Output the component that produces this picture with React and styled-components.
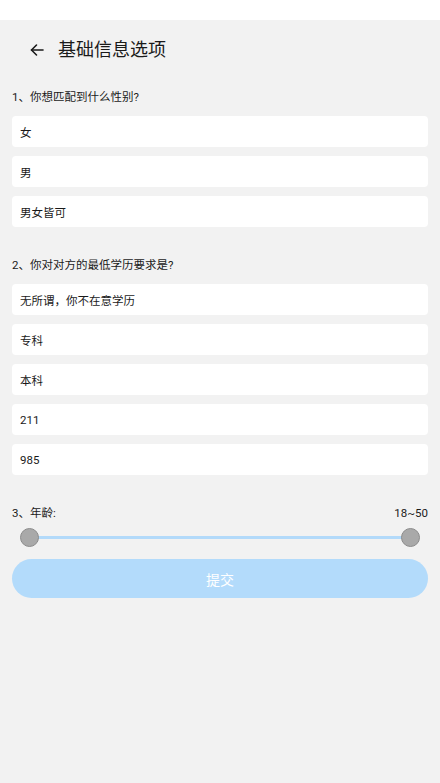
import React from "react";
import styled, { createGlobalStyle } from "styled-components";

const Global = createGlobalStyle`
  html, body { margin: 0; padding: 0; background: #f2f2f2; }
  body { font-family: Roboto, "Noto Sans CJK SC", sans-serif; color: #1a1a1a; }
  * { box-sizing: border-box; }
`;

const Page = styled.div`
  min-height: 783px;
  background: #f2f2f2;
  display: flex;
  flex-direction: column;
`;

const StatusBar = styled.div`
  height: 20px;
  background: #ffffff;
`;

const Header = styled.div`
  height: 60px;
  display: flex;
  align-items: center;
  padding-left: 29px;
  gap: 13px;
`;

const Title = styled.h1`
  margin: 0;
  font-size: 18px;
  font-weight: 400;
  color: #1a1a1a;
  line-height: 24px;
`;

const BackBtn = styled.span`
  display: flex;
  width: 16px;
  height: 16px;
  align-items: center;
  justify-content: center;
`;

const Content = styled.div`
  padding: 9px 12px 0;
  display: flex;
  flex-direction: column;
`;

const Section = styled.div`
  display: flex;
  flex-direction: column;
  gap: 9px;
  margin-bottom: 30px;
`;

const QLabel = styled.div`
  font-size: 11.5px;
  line-height: 16px;
  color: #1a1a1a;
  margin-bottom: 2px;
`;

const LabelRow = styled.div`
  display: flex;
  justify-content: space-between;
  font-size: 11.5px;
  line-height: 16px;
  color: #1a1a1a;
`;

const Option = styled.div`
  height: 31px;
  background: #ffffff;
  border-radius: 4px;
  padding-left: 8px;
  display: flex;
  align-items: center;
  font-size: 11.5px;
  color: #1a1a1a;
`;

const SliderWrap = styled.div`
  position: relative;
  height: 20px;
  margin: 6px 8px 0;
  display: flex;
  align-items: center;
`;

const Track = styled.div`
  flex: 1;
  height: 3px;
  margin: 0 10px;
  background: #b3dafa;
  border-radius: 2px;
`;

const Thumb = styled.div`
  position: absolute;
  top: 0.5px;
  ${(p) => (p.$right ? "right: 0;" : "left: 0;")}
  width: 19px;
  height: 19px;
  border-radius: 50%;
  background: #a9a9a9;
  border: 1px solid #8c8c8c;
`;

const Submit = styled.button`
  margin-top: 12px;
  height: 39px;
  border: none;
  border-radius: 20px;
  background: #b3dbfb;
  color: #ffffff;
  font-family: inherit;
  font-size: 14px;
  width: 100%;
`;

const q1 = ["女", "男", "男女皆可"];
const q2 = ["无所谓，你不在意学历", "专科", "本科", "211", "985"];

export default function App() {
  return (
    <Page>
      <Global />
      <StatusBar />
      <Header>
        <BackBtn>
          <svg width="16" height="16" viewBox="0 0 16 16" fill="none" stroke="#1a1a1a" strokeWidth="1.6" strokeLinecap="round" strokeLinejoin="round">
            <path d="M14 8H2.5" />
            <path d="M7.5 3L2.5 8l5 5" />
          </svg>
        </BackBtn>
        <Title>基础信息选项</Title>
      </Header>
      <Content>
        <Section>
          <QLabel>1、你想匹配到什么性别?</QLabel>
          {q1.map((o) => (
            <Option key={o}>{o}</Option>
          ))}
        </Section>
        <Section>
          <QLabel>2、你对对方的最低学历要求是?</QLabel>
          {q2.map((o) => (
            <Option key={o}>{o}</Option>
          ))}
        </Section>
        <LabelRow>
          <span>3、年龄:</span>
          <span>18~50</span>
        </LabelRow>
        <SliderWrap>
          <Thumb />
          <Track />
          <Thumb $right />
        </SliderWrap>
        <Submit>提交</Submit>
      </Content>
    </Page>
  );
}
